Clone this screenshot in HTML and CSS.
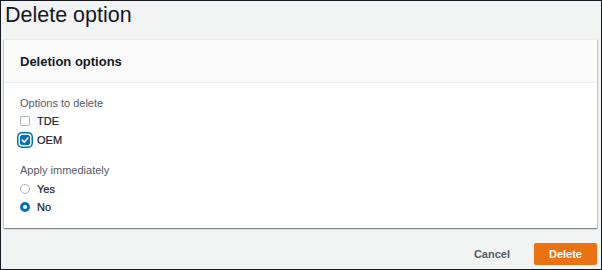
FILE: index.html
```html
<!DOCTYPE html>
<html lang="en">
<head>
    <meta charset="UTF-8">
    <title>Delete option</title>
    <link rel="stylesheet" href="styles.css">
</head>
<body>
    <div class="frame">
        <h1 class="page-title">Delete option</h1>

        <div class="card">
            <div class="card-header">Deletion options</div>
            <div class="card-body">
                <div class="group">
                    <div class="group-label">Options to delete</div>
                    <label class="option">
                        <span class="checkbox"></span>
                        <span class="option-text">TDE</span>
                    </label>
                    <label class="option">
                        <span class="checkbox checked focused">
                            <svg viewBox="0 0 10 10" width="10" height="10"><path d="M2.2 5.2 L4.2 7.1 L7.9 3" fill="none" stroke="#fff" stroke-width="1.6" stroke-linecap="round" stroke-linejoin="round"/></svg>
                        </span>
                        <span class="option-text">OEM</span>
                    </label>
                </div>

                <div class="group">
                    <div class="group-label">Apply immediately</div>
                    <label class="option">
                        <span class="radio"></span>
                        <span class="option-text">Yes</span>
                    </label>
                    <label class="option">
                        <span class="radio checked"></span>
                        <span class="option-text">No</span>
                    </label>
                </div>
            </div>
        </div>

        <div class="actions">
            <button class="btn btn-link">Cancel</button>
            <button class="btn btn-primary">Delete</button>
        </div>
    </div>
</body>
</html>
```

FILE: styles.css
```css
* {
    box-sizing: border-box;
}

body {
    margin: 0;
    font-family: "Liberation Sans", Arial, sans-serif;
    color: #16191f;
}

.frame {
    width: 602px;
    height: 270px;
    border: 1px solid #16191f;
    background-color: #f2f3f3;
    padding: 0 4px 0 3px;
}

.page-title {
    margin: 0 0 10px 0;
    padding-left: 1px;
    font-size: 21.5px;
    line-height: 28px;
    font-weight: normal;
}

.card {
    background-color: #fff;
    border-top: 1px solid #eaeded;
    box-shadow: 0 1px 1px 0 rgba(0, 28, 36, 0.3), 1px 1px 1px 0 rgba(0, 28, 36, 0.15), -1px 1px 1px 0 rgba(0, 28, 36, 0.15);
}

.card-header {
    height: 43px;
    line-height: 43px;
    padding: 0 16px;
    background-color: #fafafa;
    border-bottom: 1px solid #eaeded;
    font-size: 13px;
    font-weight: bold;
}

.card-body {
    padding: 10.5px 16px 11.5px;
}

.group + .group {
    margin-top: 12px;
}

.group-label {
    font-size: 11px;
    line-height: 18.5px;
    color: #545b64;
}

.option {
    display: flex;
    align-items: center;
    height: 18.5px;
    font-size: 11px;
}

.option-text {
    margin-left: 7px;
    -webkit-text-stroke: 0.2px #16191f;
}

.checkbox {
    display: flex;
    align-items: center;
    justify-content: center;
    width: 10px;
    height: 10px;
    border: 1px solid #aab7b8;
    border-radius: 2px;
    background-color: #fff;
}

.checkbox.checked {
    border-color: #0073bb;
    background-color: #0073bb;
}

.checkbox svg {
    display: block;
    flex: none;
}

.checkbox.focused {
    box-shadow: 0 0 0 1.5px #fff, 0 0 0 3px #0073bb;
}

.radio {
    width: 10px;
    height: 10px;
    border: 1px solid #aab7b8;
    border-radius: 50%;
    background-color: #fff;
}

.radio.checked {
    border: 3px solid #0073bb;
}

.actions {
    display: flex;
    justify-content: flex-end;
    align-items: center;
    margin-top: 15px;
    gap: 4px;
}

.btn {
    height: 22px;
    border: none;
    border-radius: 2px;
    font-family: "Liberation Sans", Arial, sans-serif;
    font-size: 11px;
    font-weight: bold;
    cursor: pointer;
}

.btn-link {
    padding: 0 20px;
    background: transparent;
    color: #545b64;
}

.btn-primary {
    padding: 0 15px;
    background-color: #ec7211;
    color: #fff;
}
```
